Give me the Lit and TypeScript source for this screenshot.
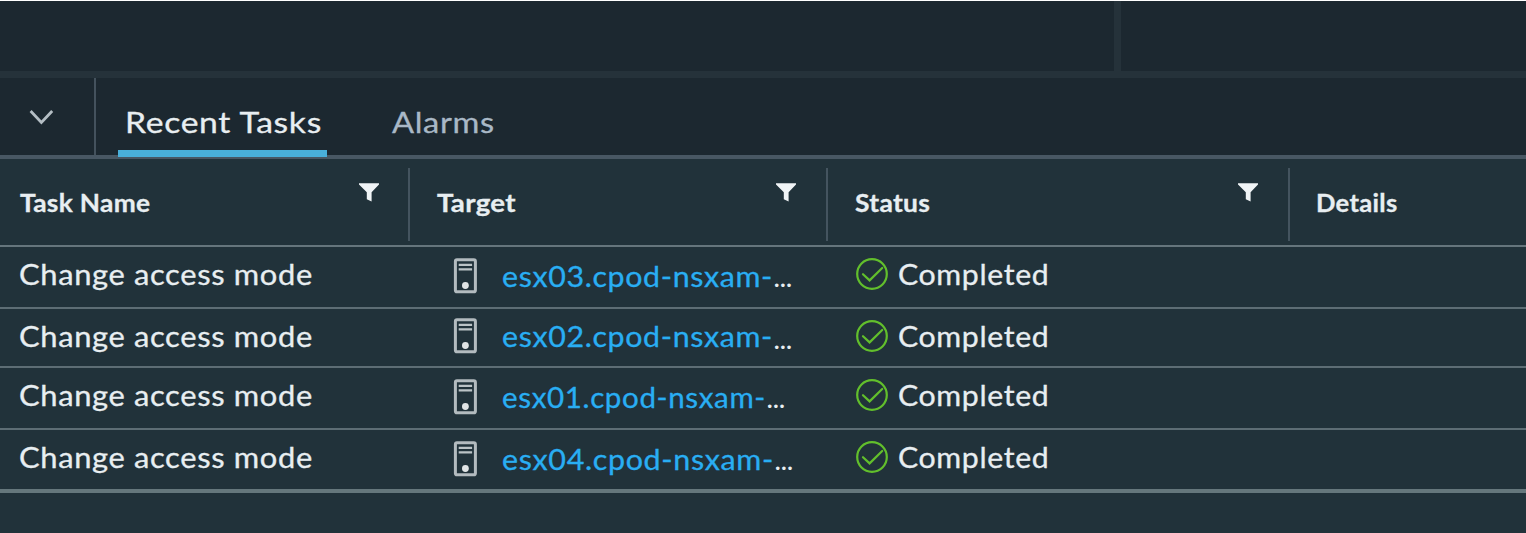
import { LitElement, html, css } from "lit";
import { customElement, property } from "lit/decorators.js";
import { styleMap } from "lit/directives/style-map.js";

interface Task {
  name: string;
  target: string;
  targetWidth: number;
  targetScale: number;
  status: string;
}

const TASKS: Task[] = [
  { name: "Change access mode", target: "esx03.cpod-nsxam-", targetWidth: 272, targetScale: 1.083, status: "Completed" },
  { name: "Change access mode", target: "esx02.cpod-nsxam-", targetWidth: 272, targetScale: 1.083, status: "Completed" },
  { name: "Change access mode", target: "esx01.cpod-nsxam-", targetWidth: 265, targetScale: 1.055, status: "Completed" },
  { name: "Change access mode", target: "esx04.cpod-nsxam-", targetWidth: 273, targetScale: 1.087, status: "Completed" },
];

const COLUMNS = [
  { label: "Task Name", filter: true, stretch: 1.095 },
  { label: "Target", filter: true, stretch: 1.15 },
  { label: "Status", filter: true, stretch: 1.1 },
  { label: "Details", filter: false, stretch: 1.065 },
];

const filterIcon = html`<svg class="filter" viewBox="0 0 22 20" width="22" height="20">
  <path d="M1 1.2H21V2.6L13.6 10.2V19.4L8.8 17.2V10.2L1 2.6Z" fill="#f0f4f6" />
</svg>`;

const hostIcon = html`<svg class="host" viewBox="0 0 24 36" width="24" height="36">
  <rect x="2.4" y="1.8" width="20" height="32" rx="1.6" fill="none" stroke="#b3bbbf" stroke-width="3" />
  <path d="M5.7 6.8H19.1M5.7 11.3H19.1" stroke="#bbc3c6" stroke-width="2.3" />
  <circle cx="12.4" cy="27.5" r="3.4" fill="#e0e4e5" />
</svg>`;

const checkIcon = html`<svg class="check" viewBox="0 0 34 34" width="34" height="34">
  <circle cx="17" cy="17" r="14.8" fill="none" stroke="#62bf2c" stroke-width="2.2" />
  <path d="M8 17.2L14.6 23.4L27.2 11" fill="none" stroke="#62bf2c" stroke-width="2.2" stroke-linecap="round" />
</svg>`;

@customElement("task-row")
class TaskRow extends LitElement {
  @property({ attribute: false }) task!: Task;

  static styles = css`
    :host {
      display: grid;
      grid-template-columns: 410px 418px 461px 1fr;
      box-sizing: border-box;
      color: #e8eef1;
      font-size: 28px;
      line-height: 34px;
    }
    .cell {
      display: flex;
      align-items: flex-start;
      white-space: nowrap;
      letter-spacing: 0.6px;
    }
    .text {
      display: block;
      transform-origin: 0 0;
      -webkit-text-stroke: 0.3px currentColor;
    }
    .name {
      padding: 10px 0 0 19px;
    }
    .name .text {
      transform: scaleX(1.102);
    }
    .target {
      padding: var(--target-top, 11px) 0 0 43px;
    }
    .link {
      flex: none;
      margin: 1px 0 0 25px;
      color: #29aef3;
    }
    .dots {
      margin-top: var(--dots-top, 3px);
      font-size: 23px;
      font-weight: 700;
      letter-spacing: -0.4px;
    }
    .status {
      padding: 10px 0 0 27px;
    }
    .status .text {
      margin: 0 0 0 9px;
      transform: scaleX(1.08);
    }
    svg {
      display: block;
      flex: none;
    }
  `;

  render() {
    const t = this.task;
    const link = { width: `${t.targetWidth}px`, transform: `scaleX(${t.targetScale})` };
    return html`
      <div class="cell name"><span class="text">${t.name}</span></div>
      <div class="cell target">
        ${hostIcon}<span class="text link" style=${styleMap(link)}>${t.target}</span><span class="dots">…</span>
      </div>
      <div class="cell status">${checkIcon}<span class="text">${t.status}</span></div>
    `;
  }
}

@customElement("app-root")
class AppRoot extends LitElement {
  static styles = css`
    :host {
      display: flex;
      flex-direction: column;
      box-sizing: border-box;
      width: 1526px;
      height: 533px;
      overflow: hidden;
      border-top: 1px solid #fff;
      background: #21323a;
      font-family: Lato, "Open Sans", sans-serif;
      color: #e8eef1;
    }
    .workspace {
      display: grid;
      grid-template-columns: 1114px 1fr;
      column-gap: 7px;
      height: 70px;
      background: #25323a;
    }
    .pane {
      background: #1c2830;
    }
    .splitter {
      height: 7px;
      background: #25323a;
    }
    .tabs {
      display: flex;
      height: 77px;
      border-bottom: 4px solid #485763;
      background: #1c2830;
    }
    .toggle {
      display: flex;
      box-sizing: border-box;
      width: 96px;
      padding: 30px 0 0 28px;
      border-right: 2px solid #44525d;
    }
    .tab {
      box-sizing: border-box;
      height: 79px;
      padding: 25px 6px 0 7px;
      font-size: 29.5px;
      line-height: 38px;
      letter-spacing: 0.6px;
      white-space: nowrap;
      color: #a9b8c6;
    }
    .text {
      display: block;
      transform-origin: 0 0;
    }
    .tab .text {
      transform: scaleX(1.105);
      -webkit-text-stroke: 0.3px currentColor;
    }
    .active {
      width: 209px;
      margin-left: 22px;
      border-bottom: 7px solid #49afd9;
      color: #e8eef1;
    }
    .active .text {
      transform: scaleX(1.142);
    }
    .alarms {
      margin-left: 58px;
    }
    .head {
      display: grid;
      grid-template-columns: 410px 418px 462px 1fr;
      height: 86px;
      border-bottom: 2px solid #65757c;
    }
    .col {
      display: flex;
      justify-content: space-between;
      box-sizing: border-box;
      height: 73px;
      margin-top: 9px;
      padding: 20px 29px 0 27px;
      border-right: 2px solid #44545f;
      font-size: 24px;
      line-height: 30px;
      font-weight: 700;
      letter-spacing: 0.3px;
      -webkit-text-stroke: 0.3px currentColor;
    }
    .col:first-child {
      padding-left: 20px;
      padding-right: 28px;
    }
    .col:last-child {
      border-right: 0;
      padding-left: 26px;
    }
    .filter {
      display: block;
      margin-top: -6px;
    }
    .rows {
      display: grid;
      grid-template-rows: 62px 59px 62px 63px;
    }
    task-row {
      border-bottom: 2px solid #5d6d74;
    }
    task-row:nth-child(2) {
      --target-top: 9px;
      --dots-top: 5px;
    }
    task-row:last-child {
      border-bottom: 4px solid #65777c;
    }
  `;

  render() {
    return html`
      <div class="workspace"><div class="pane"></div><div class="pane"></div></div>
      <div class="splitter"></div>
      <div class="tabs">
        <div class="toggle">
          <svg width="27" height="20" viewBox="0 0 27 20">
            <path d="M2.6 3L13.4 14.4L24.2 3" fill="none" stroke="#b4bec4" stroke-width="2.8" />
          </svg>
        </div>
        <div class="tab active"><span class="text">Recent Tasks</span></div>
        <div class="tab alarms"><span class="text">Alarms</span></div>
      </div>
      <div class="head">
        ${COLUMNS.map(
          (c) => html`<div class="col">
            <span class="text" style=${styleMap({ transform: `scaleX(${c.stretch})` })}>${c.label}</span>
            ${c.filter ? filterIcon : ""}
          </div>`
        )}
      </div>
      <div class="rows">${TASKS.map((t) => html`<task-row .task=${t}></task-row>`)}</div>
    `;
  }
}
